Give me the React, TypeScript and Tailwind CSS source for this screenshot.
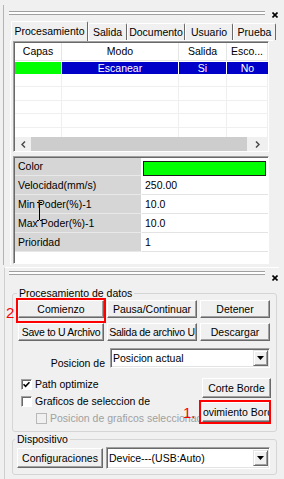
import React from "react";

function XIcon() {
  return (
    <svg width="6" height="6" viewBox="0 0 6 6" className="block">
      <path d="M0.5 0.5 L5.5 5.5 M5.5 0.5 L0.5 5.5" stroke="#000" strokeWidth="1.6" />
    </svg>
  );
}

function Btn({ className, children }: { className: string; children: React.ReactNode }) {
  return (
    <div
      className={
        "flex items-center justify-center overflow-hidden whitespace-nowrap bg-[#f0f0f0] border border-t-white border-l-white border-r-[#696969] border-b-[#696969] shadow-[inset_-1px_-1px_0_#a0a0a0] " +
        className
      }
    >
      {children}
    </div>
  );
}

function DropBtn() {
  return (
    <div className="w-[15px] h-[16px] flex items-center justify-center bg-[#f0f0f0] border border-t-[#e3e3e3] border-l-[#e3e3e3] border-r-[#696969] border-b-[#696969] shadow-[inset_1px_1px_0_#ffffff,inset_-1px_-1px_0_#a0a0a0]">
      <svg width="7" height="4" viewBox="0 0 7 4" className="block">
        <path d="M0 0H7L3.5 4Z" fill="#000" />
      </svg>
    </div>
  );
}

function Select({ text, className }: { text: string; className: string }) {
  return (
    <div
      className={
        "flex items-center bg-white border border-t-[#a0a0a0] border-l-[#a0a0a0] border-r-white border-b-white shadow-[inset_1px_1px_0_#696969,inset_-1px_-1px_0_#e3e3e3] " +
        className
      }
    >
      <span className="flex-1 pl-[2px] whitespace-nowrap overflow-hidden">{text}</span>
      <div className="mr-[1px]">
        <DropBtn />
      </div>
    </div>
  );
}

function Check({ checked, disabled }: { checked?: boolean; disabled?: boolean }) {
  return (
    <div
      className={
        disabled
          ? "w-[11px] h-[11px] shrink-0 border border-[#b8b8b8] bg-[#f0f0f0]"
          : "w-[11px] h-[11px] shrink-0 flex items-center justify-center border border-t-[#a0a0a0] border-l-[#a0a0a0] border-r-white border-b-white bg-white shadow-[inset_1px_1px_0_#696969]"
      }
    >
      {checked && (
        <svg width="7" height="7" viewBox="0 0 7 7" className="block">
          <path d="M0.5 3.2 L2.6 5.4 L6.5 1.2" stroke="#000" strokeWidth="1.6" fill="none" />
        </svg>
      )}
    </div>
  );
}

const colW = ["w-[47px]", "w-[117px]", "w-[48px]", "w-[41px]"];

function Chevron({ dir }: { dir: "l" | "r" }) {
  return (
    <svg width="5" height="7" viewBox="0 0 5 7" className="block">
      <path
        d={dir === "l" ? "M4 0.5 L1 3.5 L4 6.5" : "M1 0.5 L4 3.5 L1 6.5"}
        stroke="#4a4a4a"
        strokeWidth="1.5"
        fill="none"
      />
    </svg>
  );
}

function ListTable() {
  const emptyRows = ["h-[13px]", "h-[14px]", "h-[13px]", "h-[14px]"];
  return (
    <div className="w-[256px] h-[111px] shrink-0 border-t border-l border-t-[#a0a0a0] border-l-[#a0a0a0] border-r border-b border-r-white border-b-white">
      <div className="h-full border-t border-l border-[#696969] flex flex-col bg-white">
        <div className="h-[18px] shrink-0 flex border-b border-[#e5e5e5]">
          {["Capas", "Modo", "Salida", "Esco..."].map((h, i) => (
            <div key={h} className={colW[i] + " h-full flex items-center justify-center border-r border-[#e5e5e5]"}>
              {h}
            </div>
          ))}
        </div>
        <div className="h-[13px] shrink-0 flex leading-[12px]">
          <div className="w-[47px] h-full border-r border-t border-white bg-[#00ff00]" />
          <div className="w-[117px] h-full border-r border-t border-white bg-[#0000c8] text-white flex items-center justify-center">
            Escanear
          </div>
          <div className="w-[48px] h-full border-r border-t border-white bg-[#0000c8] text-white flex items-center justify-center">
            Si
          </div>
          <div className="w-[41px] h-full border-t border-white bg-[#0000c8] text-white flex items-center justify-center">
            No
          </div>
        </div>
        {emptyRows.map((h, r) => (
          <div key={r} className={h + " shrink-0 flex border-b border-[#efefef]"}>
            {colW.map((w, i) => (
              <div key={i} className={w + " h-full border-r border-[#efefef]"} />
            ))}
          </div>
        ))}
        <div className="h-[9px] shrink-0 flex">
          {colW.map((w, i) => (
            <div key={i} className={w + " h-full border-r border-[#efefef]"} />
          ))}
        </div>
        <div className="h-[14px] shrink-0 flex bg-[#f0f0f0]">
          <div className="w-[16px] h-full flex items-center justify-center">
            <Chevron dir="l" />
          </div>
          <div className="w-[216px] h-full bg-[#cdcdcd]" />
          <div className="flex-1 h-full flex items-center justify-center">
            <Chevron dir="r" />
          </div>
        </div>
      </div>
    </div>
  );
}

function PropGrid() {
  const rows: [string, string][] = [
    ["Velocidad(mm/s)", "250.00"],
    ["Min Poder(%)-1", "10.0"],
    ["Max Poder(%)-1", "10.0"],
    ["Prioridad", "1"],
  ];
  return (
    <div className="mt-[4px] w-[256px] h-[108px] shrink-0 border-t border-l border-t-[#a0a0a0] border-l-[#a0a0a0] border-r border-b border-r-white border-b-white">
      <div className="relative h-full border-t border-l border-[#696969] flex flex-col bg-white">
        <div className="h-[18px] shrink-0 flex">
          <div className="w-[126px] h-full bg-[#d6d6d6] border-b border-[#e8e8e8] pl-[3px] flex items-center">Color</div>
          <div className="flex-1 h-full pl-[1px] pr-[2px] pt-[3px] border-l border-white">
            <div className="h-[15px] bg-[#00ff00] border border-[#1a1a1a]" />
          </div>
        </div>
        {rows.map(([k, v]) => (
          <div key={k} className="h-[19px] shrink-0 flex">
            <div className="w-[126px] h-full bg-[#d6d6d6] border-b border-[#e8e8e8] pl-[3px] flex items-center">{k}</div>
            <div className="flex-1 h-full border-b border-l border-b-[#e3e3e3] border-l-white pl-[3px] flex items-center">{v}</div>
          </div>
        ))}
        <div className="flex-1" />
        <svg width="7" height="19" viewBox="0 0 7 19" className="absolute left-[21px] top-[44px]">
          <path d="M1 0.5 H3 M4 0.5 H6 M3.5 1 V18 M1 18.5 H3 M4 18.5 H6" stroke="#000" strokeWidth="1" fill="none" />
        </svg>
      </div>
    </div>
  );
}

function TopPanel() {
  const tabs: { label: string; w: string; active?: boolean }[] = [
    { label: "Procesamiento", w: "w-[77px]", active: true },
    { label: "Salida", w: "w-[39px]" },
    { label: "Documento", w: "w-[58px]" },
    { label: "Usuario", w: "w-[48px]" },
    { label: "Prueba", w: "w-[43px]" },
  ];
  return (
    <div className="ml-[3px] mt-[5px] w-[278px] h-[260px] shrink-0 border-l border-[#b4b4b4] flex flex-col">
      <div className="ml-[5px] mt-[6px] h-[4px] shrink-0 flex items-start">
        <div className="w-[256px] h-[4px] border-y border-[#a0a0a0] bg-white" />
        <div className="ml-[7px] mt-[1px]">
          <XIcon />
        </div>
      </div>
      <div className="ml-[7px] mt-[6px] h-[20px] shrink-0 flex items-end">
        {tabs.map((t) =>
          t.active ? (
            <div
              key={t.label}
              className={
                t.w +
                " relative z-10 h-[20px] flex items-center justify-center whitespace-nowrap bg-[#f0f0f0] border-l border-t border-r border-l-white border-t-white border-r-[#696969] rounded-t-[2px]"
              }
            >
              {t.label}
            </div>
          ) : (
            <div
              key={t.label}
              className={
                t.w +
                " h-[17px] mb-[1px] flex items-center justify-center whitespace-nowrap bg-[#f0f0f0] border-l border-t border-r border-l-white border-t-white border-r-[#696969] rounded-t-[2px]"
              }
            >
              {t.label}
            </div>
          )
        )}
      </div>
      <div className="ml-[6px] w-[263px] flex-1 -mt-px border-t border-l border-white pl-[2px] flex flex-col">
        <ListTable />
        <PropGrid />
      </div>
    </div>
  );
}

function BottomPanel() {
  return (
    <div className="ml-[4px] mt-[2px] w-[275px] flex-1 border-l border-t border-l-[#cfcfcf] border-t-white flex flex-col">
      <div className="ml-[4px] mt-[3px] h-[4px] shrink-0 flex items-start">
        <div className="w-[256px] h-[4px] border-y border-[#a0a0a0] bg-white" />
        <div className="ml-[7px] mt-[4px]">
          <XIcon />
        </div>
      </div>

      <fieldset className="mt-[12px] ml-[7px] w-[265px] border border-[#d5d5d5] rounded-[3px] pb-[4px]">
        <legend className="ml-[4px] px-[2px] leading-[13px]">Procesamiento de datos</legend>
        <div className="pl-[5px] grid grid-cols-[86px_90px_70px] gap-x-[3px] gap-y-[5px]">
          <div className="relative">
            <Btn className="h-[18px]">Comienzo</Btn>
            <div className="absolute -left-[2px] -top-[2px] w-[90px] h-[25px] border-2 border-[#ff0000]" />
            <span className="absolute -left-[12px] top-[5px] text-[15px] leading-[15px] text-[#ff0000]">2</span>
          </div>
          <Btn className="h-[18px]">Pausa/Continuar</Btn>
          <Btn className="h-[18px]">Detener</Btn>
          <Btn className="h-[18px] tracking-[-0.3px]">Save to U Archivo</Btn>
          <Btn className="h-[18px] tracking-[-0.3px]">Salida de archivo U</Btn>
          <Btn className="h-[18px]">Descargar</Btn>
        </div>
        <div className="mt-[7px] flex items-end">
          <span className="flex-1 text-right pr-[5px] -mb-[2px]">Posicion de</span>
          <Select text="Posicion actual" className="w-[160px] h-[20px] mr-[6px]" />
        </div>
        <div className="mt-[8px] flex items-start">
          <div className="w-[186px] overflow-hidden whitespace-nowrap flex flex-col">
            <div className="h-[17px] pl-[8px] flex items-center gap-[3px]">
              <Check checked />
              <span>Path optimize</span>
            </div>
            <div className="h-[17px] pl-[8px] flex items-center gap-[3px]">
              <Check />
              <span>Graficos de seleccion de</span>
            </div>
            <div className="h-[17px] pl-[23px] flex items-center gap-[3px] text-[#a0a0a0]">
              <Check disabled />
              <span>Posicion de graficos seleccionados</span>
            </div>
          </div>
          <div className="ml-[3px] pt-[2px] flex flex-col gap-[4px]">
            <Btn className="w-[69px] h-[20px]">Corte Borde</Btn>
            <div className="relative">
              <Btn className="w-[69px] h-[20px]">Movimiento Borde</Btn>
              <div className="absolute -left-[3px] -top-[2px] w-[72px] h-[24px] border-2 border-[#ff0000]" />
              <span className="absolute -left-[19px] top-[3px] text-[15px] leading-[15px] text-[#ff0000]">1.</span>
            </div>
          </div>
        </div>
      </fieldset>

      <fieldset className="mt-[1px] ml-[7px] w-[265px] border border-[#d5d5d5] rounded-[3px] pb-[5px]">
        <legend className="ml-[2px] px-[2px] leading-[13px]">Dispositivo</legend>
        <div className="mt-[1px] h-[22px] pl-[4px] flex items-center">
          <Btn className="w-[86px] h-[20px]">Configuraciones</Btn>
          <Select text="Device---(USB:Auto)" className="ml-[3px] w-[164px] h-[22px]" />
        </div>
      </fieldset>
    </div>
  );
}

export default function App() {
  return (
    <div className="w-[284px] h-[479px] overflow-hidden bg-[#f0f0f0] text-black text-[10.5px] leading-[13px] font-['Liberation_Sans',Arial,sans-serif] flex flex-col">
      <TopPanel />
      <BottomPanel />
    </div>
  );
}
